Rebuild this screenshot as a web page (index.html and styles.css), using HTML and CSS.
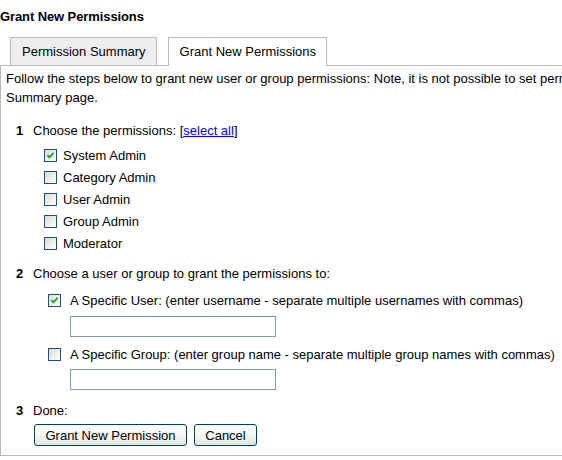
FILE: index.html
```html
<!DOCTYPE html>
<html>
<head>
<meta charset="utf-8">
<link rel="stylesheet" href="styles.css">
</head>
<body>
<div class="title">Grant New Permissions</div>
<div class="tabs">
  <div class="tab">Permission Summary</div>
  <div class="tab active">Grant New Permissions</div>
</div>
<div class="panel">
  <p class="intro">Follow the steps below to grant new user or group permissions: Note, it is not possible to set permissions from this page, use the Permission<br>Summary page.</p>

  <div class="step s1"><span class="num">1</span><span>Choose the permissions: [<a href="#">select all</a>]</span></div>
  <div class="perms">
    <div class="row"><span class="cb"><svg viewBox="0 0 13 13" width="13" height="13"><path d="M3.5 6.2 L5.4 8.4 L9.6 3.8" fill="none" stroke="#21a121" stroke-width="1.8"/></svg></span>System Admin</div>
    <div class="row"><span class="cb"></span>Category Admin</div>
    <div class="row"><span class="cb"></span>User Admin</div>
    <div class="row"><span class="cb"></span>Group Admin</div>
    <div class="row"><span class="cb"></span>Moderator</div>
  </div>

  <div class="step s2"><span class="num">2</span><span>Choose a user or group to grant the permissions to:</span></div>
  <div class="who">
    <div class="row wide first"><span class="cb"><svg viewBox="0 0 13 13" width="13" height="13"><path d="M3.5 6.2 L5.4 8.4 L9.6 3.8" fill="none" stroke="#21a121" stroke-width="1.8"/></svg></span>A Specific User: (enter username - separate multiple usernames with commas)</div>
    <input class="field" type="text">
    <div class="row wide"><span class="cb"></span>A Specific Group: (enter group name - separate multiple group names with commas)</div>
    <input class="field f2" type="text">
  </div>

  <div class="step s3"><span class="num">3</span><span>Done:</span></div>
  <div class="buttons">
    <button class="btn grant">Grant New Permission</button>
    <button class="btn cancel">Cancel</button>
  </div>
</div>
</body>
</html>
```
FILE: styles.css
```css
html, body {
  margin: 0;
  padding: 0;
  overflow: hidden;
  background: #fff;
}
body {
  font-family: "Liberation Sans", Arial, sans-serif;
  font-size: 13px;
  color: #000;
  width: 900px;
}
.title {
  font-weight: bold;
  font-size: 13px;
  line-height: 19px;
  padding-top: 7px;
  letter-spacing: -0.1px;
}
.tabs {
  display: flex;
  gap: 11px;
  padding-left: 10px;
  margin-top: 11px;
  position: relative;
  z-index: 1;
}
.tab {
  box-sizing: border-box;
  height: 28px;
  border: 1px solid #bbbbbb;
  border-bottom: none;
  background: #eeeeee;
  padding: 5px 10px 0 11px;
  line-height: 17px;
}
.tab.active {
  background: #fff;
  height: 29px;
  margin-bottom: -1px;
}
.panel {
  border: 1px solid #bbbbbb;
  width: 800px;
  height: 391px;
  box-sizing: border-box;
}
.intro {
  margin: 0;
  padding: 3px 0 0 5px;
  line-height: 19px;
  white-space: nowrap;
}
.step {
  display: flex;
  padding-left: 15px;
  line-height: 19px;
}
.num {
  font-weight: bold;
  width: 17px;
}
.s1 { margin-top: 14px; }
.s2 { margin-top: 10px; }
.s3 { margin-top: 11px; }
.perms {
  margin-top: 4px;
  padding-left: 43px;
}
.row {
  display: flex;
  align-items: center;
  height: 22px;
  gap: 6px;
  white-space: nowrap;
}
.who {
  padding-left: 47px;
  display: flex;
  flex-direction: column;
  align-items: flex-start;
}
.row.wide {
  gap: 9px;
  margin-top: 6px;
}
.cb {
  box-sizing: border-box;
  width: 13px;
  height: 13px;
  border: 1px solid #1c5180;
  background: linear-gradient(135deg, #dcdcd6 0%, #f4f4f0 70%, #ffffff 100%);
  display: inline-block;
  flex: none;
  position: relative;
}
.cb svg {
  position: absolute;
  left: -1px;
  top: -1px;
}
.field {
  box-sizing: border-box;
  margin: 5px 0 0 22px;
  width: 206px;
  height: 21px;
  border: 1px solid #7f9db9;
  padding: 0;
  background: #fff;
}
.field.f2 { margin-top: 4px; }
a { color: #0000ff; }
.buttons {
  display: flex;
  gap: 7px;
  padding-left: 33px;
  margin-top: 4px;
}
.btn {
  box-sizing: border-box;
  height: 22px;
  font-family: "Liberation Sans", Arial, sans-serif;
  font-size: 13px;
  color: #000;
  border: 1px solid #003c74;
  border-radius: 3px;
  background: linear-gradient(#ffffff 0%, #f4f4f0 60%, #e3e3db 100%);
  padding: 0;
}
.grant { width: 153px; }
.cancel { width: 63px; }
```
